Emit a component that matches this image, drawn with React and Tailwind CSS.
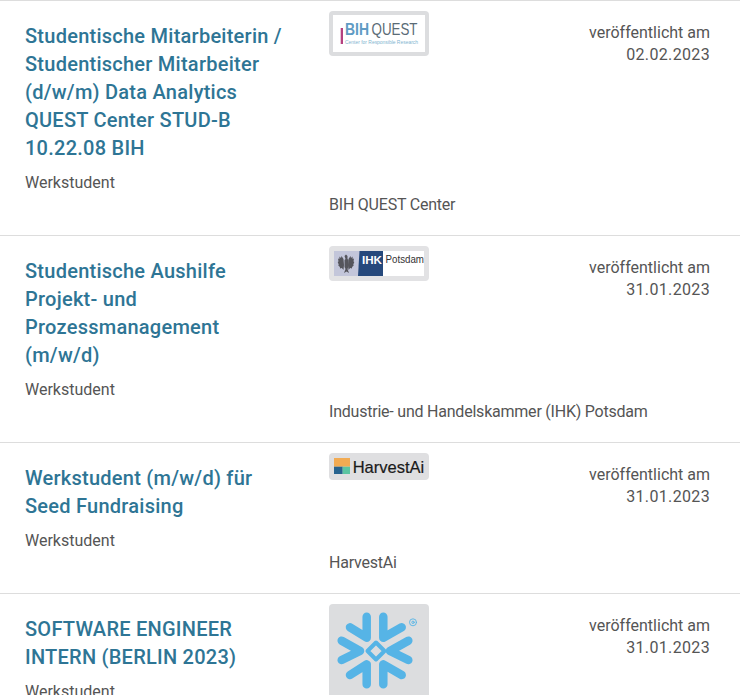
import React from "react";

const logoFont = "'Liberation Sans', sans-serif";

const Bih = () => (
  <div className="w-[100px] h-[45px] bg-[#dcdddf] rounded p-[4px]">
    <div className="w-full h-full bg-white overflow-hidden">
      <svg viewBox="0 0 92 37" className="w-full h-full">
        <rect x="7.7" y="13" width="2.3" height="16" fill="#b5417f" />
        <text x="12" y="20" fontFamily={logoFont} fontSize="16.5" fill="#5f9bc4" fontWeight="700" textLength="24" lengthAdjust="spacingAndGlyphs">BIH</text>
        <text x="38.5" y="20" fontFamily={logoFont} fontSize="16.5" fill="#5a6b76" textLength="46" lengthAdjust="spacingAndGlyphs">QUEST</text>
        <text x="12" y="29" fontFamily={logoFont} fontSize="5" fill="#7fb5d0" textLength="73" lengthAdjust="spacingAndGlyphs">Center for Responsible Research</text>
      </svg>
    </div>
  </div>
);

const Ihk = () => (
  <div className="w-[100px] h-[35px] bg-[#e2e2e4] rounded px-[5px] py-[5px]">
    <div className="w-full h-full bg-white overflow-hidden">
      <svg viewBox="0 0 90 25" className="w-full h-full">
        <rect width="26" height="25" fill="#c3c6da" />
        <g fill="#55555c">
          <path d="M10.5 5l1.500-1.500 1.500 1.500 0 3 1 1v7l-1 2 1.500 4-2.500-1.500-2.500 1.500 1.500-4-1-2v-7l1-1z" />
          <path d="M9.500 8L7.500 5l-.5 2-1.500-1.500-.2 2.500-1.300-.5.5 3-.8.5 1 2.500-.4 1 1.600 1.500.1 1.500 1.800-.5 1.700 2 .5-5z" />
          <path d="M14.500 8l2-3 .5 2 1.500-1.500.2 2.500 1.300-.5-.5 3 .8.5-1 2.500.4 1-1.600 1.500-.1 1.500-1.800-.5-1.700 2-.5-5z" />
        </g>
        <path d="M25.500 0H49v25H24z" fill="#26497c" />
        <text x="28" y="12.700" fontFamily={logoFont} fontSize="11" fontWeight="700" fill="#fff" textLength="20" lengthAdjust="spacingAndGlyphs">IHK</text>
        <text x="51.500" y="12" fontFamily={logoFont} fontSize="10" fill="#333" textLength="38.500" lengthAdjust="spacingAndGlyphs">Potsdam</text>
      </svg>
    </div>
  </div>
);

const Harvest = () => (
  <div className="w-[100px] h-[27px] bg-[#dfdfe1] rounded">
    <svg viewBox="0 0 100 27" className="w-full h-full">
      <rect x="5" y="5" width="16" height="8.700" fill="#f2ab53" />
      <rect x="5" y="13.700" width="8.700" height="7.300" fill="#27638f" />
      <rect x="13.700" y="13.700" width="7.300" height="7.300" fill="#5cc5a2" />
      <text x="23.700" y="20.300" fontFamily={logoFont} fontSize="17" fill="#1a1a1a" stroke="#1a1a1a" strokeWidth="0.2" textLength="71.600" lengthAdjust="spacingAndGlyphs">HarvestAi</text>
    </svg>
  </div>
);

const Snow = () => (
  <div className="w-[100px] h-[100px] bg-[#dcdddf] rounded">
    <svg viewBox="0 0 100 100" className="w-full h-full" fill="none" stroke="#56b4e6" strokeWidth="8.500" strokeLinecap="round" strokeLinejoin="round">
      <path d="M37.700 12.700V33.700L21 23.300" />
      <path d="M54.300 12.700V33.700L72.700 23.300" />
      <path d="M12.700 36.700L31 47L12.700 56" />
      <path d="M79.300 36.700L61 47L79.300 56" />
      <path d="M21 71L37.700 60.300V80.300" />
      <path d="M72.700 71L54.300 60.300V80.300" />
      <path d="M47 38.500L55.500 47L47 55.500L38.500 47Z" strokeWidth="4" />
      <circle cx="84" cy="18.300" r="3.500" strokeWidth="0.9" />
      <circle cx="84" cy="18.300" r="1.200" strokeWidth="0.9" />
    </svg>
  </div>
);

const Row = ({ title, logo, company, date }) => (
  <div className="grid grid-cols-[329px_minmax(0,1fr)_auto] border-t border-[#dddddd] pt-[10px] pb-[19px] pr-[30px]">
    <div className="pl-[25px] pr-[20px] pt-[11px]">
      <h3 className="text-[20px] leading-[28px] font-medium tracking-[0.25px] text-[#2e7595]">{title}</h3>
      <p className="mt-[10px] mb-[22px] text-[16px] leading-[22px] text-[#555555]">Werkstudent</p>
    </div>
    <div className="flex flex-col justify-between items-start">
      {logo}
      <p className="text-[16px] leading-[22px] tracking-[-0.22px] text-[#555555] whitespace-nowrap">{company}</p>
    </div>
    <div className="pt-[11px] text-right text-[16px] leading-[22px] text-[#555555] whitespace-nowrap">
      <p>veröffentlicht am</p>
      <p className="tracking-[0.35px]">{date}</p>
    </div>
  </div>
);

export default function App() {
  return (
    <div className="w-[740px] h-[695px] overflow-hidden bg-white" style={{ fontFamily: "Roboto, sans-serif" }}>
      <Row
        title={<>Studentische Mitarbeiterin /<br />Studentischer Mitarbeiter<br />(d/w/m) Data Analytics<br />QUEST Center STUD-B<br />10.22.08 BIH</>}
        logo={<Bih />}
        company="BIH QUEST Center"
        date="02.02.2023"
      />
      <Row
        title={<>Studentische Aushilfe<br />Projekt- und<br />Prozessmanagement<br />(m/w/d)</>}
        logo={<Ihk />}
        company="Industrie- und Handelskammer (IHK) Potsdam"
        date="31.01.2023"
      />
      <Row
        title={<>Werkstudent (m/w/d) für<br />Seed Fundraising</>}
        logo={<Harvest />}
        company="HarvestAi"
        date="31.01.2023"
      />
      <Row
        title={<>SOFTWARE ENGINEER<br />INTERN (BERLIN 2023)</>}
        logo={<Snow />}
        company=""
        date="31.01.2023"
      />
    </div>
  );
}
